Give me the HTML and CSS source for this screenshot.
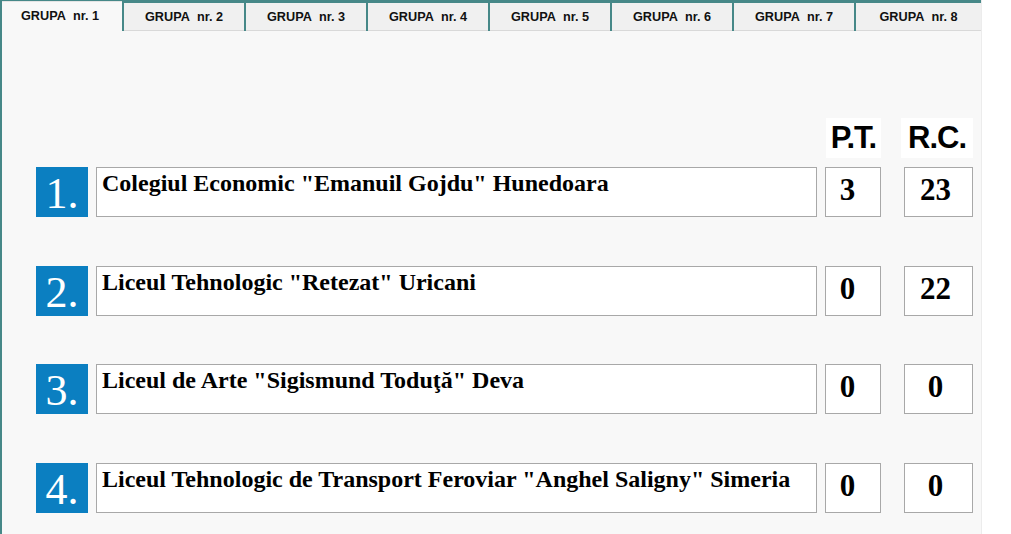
FILE: index.html
```html
<!DOCTYPE html>
<html lang="ro">
<head>
<meta charset="utf-8">
<title>Grupe</title>
<link rel="stylesheet" href="styles.css">
</head>
<body>
<div class="panel">
  <div class="tabs">
    <div class="tab active">GRUPA&nbsp; nr. 1</div>
    <div class="tab">GRUPA&nbsp; nr. 2</div>
    <div class="tab">GRUPA&nbsp; nr. 3</div>
    <div class="tab">GRUPA&nbsp; nr. 4</div>
    <div class="tab">GRUPA&nbsp; nr. 5</div>
    <div class="tab">GRUPA&nbsp; nr. 6</div>
    <div class="tab">GRUPA&nbsp; nr. 7</div>
    <div class="tab last">GRUPA&nbsp; nr. 8</div>
  </div>
  <div class="content">
    <div class="row head">
      <div class="hd hd-pt">P.T.</div>
      <div class="hd hd-rc">R.C.</div>
    </div>
    <div class="list">
      <div class="row">
        <div class="num">1.</div>
        <div class="name">Colegiul Economic "Emanuil Gojdu" Hunedoara</div>
        <div class="val pt">3</div>
        <div class="val rc">23</div>
      </div>
      <div class="row">
        <div class="num">2.</div>
        <div class="name">Liceul Tehnologic "Retezat" Uricani</div>
        <div class="val pt">0</div>
        <div class="val rc">22</div>
      </div>
      <div class="row">
        <div class="num">3.</div>
        <div class="name">Liceul de Arte "Sigismund Toduţă" Deva</div>
        <div class="val pt">0</div>
        <div class="val rc">0</div>
      </div>
      <div class="row">
        <div class="num">4.</div>
        <div class="name">Liceul Tehnologic de Transport Feroviar "Anghel Saligny" Simeria</div>
        <div class="val pt">0</div>
        <div class="val rc">0</div>
      </div>
    </div>
  </div>
</div>
</body>
</html>
```

FILE: styles.css
```css
html, body {
  margin: 0;
  padding: 0;
  background: #ffffff;
}

.panel {
  width: 979px;
  height: 534px;
  box-sizing: content-box;
  border-left: 2px solid #468888;
  border-right: 1px solid #ececec;
  background: #f8f8f8;
  overflow: hidden;
}

.tabs {
  display: flex;
  align-items: flex-end;
  gap: 2px;
  height: 31px;
  box-sizing: border-box;
  background: #468888;
}

.tab {
  width: 120px;
  height: 28px;
  box-sizing: border-box;
  background: #f0f0f0;
  border-bottom: 1px solid #d9d9d9;
  display: flex;
  align-items: center;
  justify-content: center;
  padding-top: 1px;
  font: bold 12.7px "Liberation Sans", Arial, sans-serif;
  color: #111;
  white-space: nowrap;
}

.tab.active {
  height: 30px;
  background: #f8f8f8;
  border-bottom: none;
  border-top: 1px solid #e4e4e4;
  padding-top: 0;
  padding-bottom: 2px;
  padding-right: 4px;
}

.tab.last {
  flex: 1;
}

.content {
  padding: 87px 0 0 34px;
}

.row {
  display: grid;
  grid-template-columns: 52px 721px 56px 84px;
  column-gap: 8px;
  height: 50px;
}

.row.head {
  height: 40px;
  margin-bottom: 9px;
}

.list {
  display: flex;
  flex-direction: column;
  gap: 48.7px;
}

.hd {
  background: #ffffff;
  height: 40px;
  text-align: center;
  font: bold 31px/40px "Liberation Sans", Arial, sans-serif;
  letter-spacing: -1px;
  color: #000;
}

.hd-pt {
  grid-column: 3;
  width: 55px;
  margin-left: 1px;
}

.hd-rc {
  grid-column: 4;
  width: 72px;
  justify-self: end;
}

.num {
  background: #0b7fc1;
  color: #ffffff;
  height: 50px;
  text-align: center;
  font: normal 44px/53px "Liberation Serif", "Times New Roman", serif;
  overflow: hidden;
}

.name {
  background: #ffffff;
  border: 1px solid #a8a8a8;
  box-sizing: border-box;
  height: 50px;
  padding: 2px 5px;
  font: bold 24px/26px "Liberation Serif", "Times New Roman", serif;
  color: #000;
  white-space: nowrap;
  overflow: hidden;
}

.val {
  background: #ffffff;
  border: 1px solid #a8a8a8;
  box-sizing: border-box;
  height: 50px;
  text-align: center;
  font: bold 31px/43px "Liberation Serif", "Times New Roman", serif;
  color: #000;
}

.val.pt {
  padding-right: 11px;
}

.val.rc {
  width: 69px;
  justify-self: end;
  padding-right: 6px;
}
```
